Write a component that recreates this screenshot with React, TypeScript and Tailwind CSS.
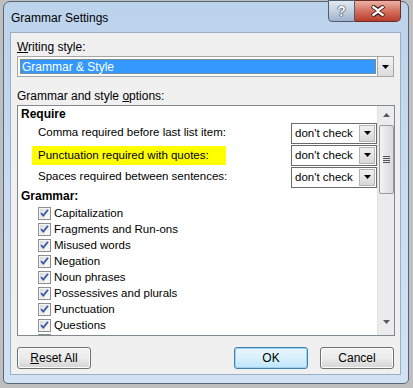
import React from 'react';

const font = { fontFamily: "'Liberation Sans', Arial, sans-serif" };

const requireRows = [
  { label: 'Comma required before last list item:', marked: false },
  { label: 'Punctuation required with quotes:', marked: true },
  { label: 'Spaces required between sentences:', marked: false },
];

const grammarItems = [
  'Capitalization',
  'Fragments and Run-ons',
  'Misused words',
  'Negation',
  'Noun phrases',
  'Possessives and plurals',
  'Punctuation',
  'Questions',
];

const DownTriangle: React.FC<{ color?: string }> = ({ color = '#000' }) => (
  <svg width="7" height="4" viewBox="0 0 7 4">
    <path d="M0 0H7L3.5 4Z" fill={color} />
  </svg>
);

const CheckBox: React.FC = () => (
  <svg width="13" height="13" viewBox="0 0 13 13" className="shrink-0">
    <defs>
      <linearGradient id="cbg" x1="0" y1="0" x2="1" y2="1">
        <stop offset="0" stopColor="#dcdcdc" />
        <stop offset="1" stopColor="#fbfbfb" />
      </linearGradient>
    </defs>
    <rect x="0.5" y="0.5" width="12" height="12" fill="#f4f4f4" stroke="#8e8f8f" />
    <rect x="2" y="2" width="9" height="9" fill="url(#cbg)" />
    <path d="M3 6.2L5.3 8.6L10 2.8" fill="none" stroke="#3d5a9e" strokeWidth="1.8" />
  </svg>
);

const Combo: React.FC = () => (
  <div className="w-[86px] h-[21px] border border-[#6b6b6b] bg-white flex items-stretch shrink-0">
    <span className="flex-1 pl-[3px] text-[11.5px] leading-[19px] text-black">don't check</span>
    <div className="w-[16px] m-[1px] border border-[#b5b5b5] bg-gradient-to-b from-[#f0f0f0] to-[#d8d8d8] flex items-center justify-center">
      <DownTriangle />
    </div>
  </div>
);

const Button: React.FC<{ children: React.ReactNode; focused?: boolean }> = ({ children, focused }) => (
  <div
    className={
      'w-[74px] h-[22px] rounded-[3px] border flex items-center justify-center text-[12px] text-black ' +
      (focused
        ? 'border-[#3c7fb1] bg-gradient-to-b from-[#eaf6fd] via-[#d9f0fc] to-[#bee6fd] shadow-[inset_0_0_0_1px_#9fd4f5]'
        : 'border-[#707070] bg-gradient-to-b from-[#f2f2f2] via-[#ebebeb] to-[#d4d4d4] shadow-[inset_0_0_0_1px_#fcfcfc]')
    }
  >
    {children}
  </div>
);

const App: React.FC = () => {
  return (
    <div className="w-[413px] h-[388px] bg-[#bfbfbf] overflow-hidden" style={font}>
      <div className="ml-[3px] mt-[1px] w-[406px] h-[383px] rounded-t-[7px] rounded-b-[5px] border border-[#5a6676] bg-gradient-to-b from-[#bcd3ec] via-[#c9dcf1] to-[#d2e2f4] relative">
        {/* title bar */}
        <div className="h-[30px] flex items-start">
          <span className="pl-[7px] pt-[9px] text-[12px] leading-[14px] text-black">Grammar Settings</span>
        </div>
        <div className="absolute top-[-2px] right-[7px] flex">
          <div className="w-[27px] h-[22px] rounded-bl-[4px] border border-[#4f5c6e] bg-gradient-to-b from-[#e1e9f3] via-[#c3d1e1] to-[#9fb3cb] flex items-center justify-center">
            <span className="text-[14px] font-bold text-white [text-shadow:0_0_1px_#223,0_0_1px_#223,0_0_1px_#223]">?</span>
          </div>
          <div className="w-[46px] h-[22px] rounded-br-[5px] border border-l-0 border-[#6d2a25] bg-gradient-to-b from-[#eab2a6] via-[#d5705f] to-[#b93c2c] flex items-center justify-center">
            <svg width="16" height="12" viewBox="0 0 16 12">
              <path d="M2 1L8 5L14 1M2 11L8 7L14 11" fill="none" stroke="#3a1a18" strokeWidth="4.2" strokeLinejoin="round" />
              <path d="M2.5 1.5L8 5.5L13.5 1.5M2.5 10.5L8 6.5L13.5 10.5" fill="none" stroke="#fff" strokeWidth="2.2" />
            </svg>
          </div>
        </div>

        {/* client area */}
        <div className="mx-[6px] w-[391px] h-[343px] border border-[#9aaec6] bg-[#f0f0f0] pl-[6px] pr-[6px] pt-[7px]">
          <div className="text-[12px] leading-[14px] text-black">
            <span className="underline">W</span>riting style:
          </div>
          <div className="mt-[2px] w-[377px] h-[21px] border border-[#a5a5a5] bg-white flex items-stretch">
            <div className="flex-1 m-[2px] mr-[1px] bg-[#3399ff] border border-dotted border-[#c08030] flex items-center">
              <span className="pl-[1px] text-[12px] text-white">Grammar &amp; Style</span>
            </div>
            <div className="w-[16px] border-l border-[#a5a5a5] bg-gradient-to-b from-[#f4f4f4] to-[#dcdcdc] flex items-center justify-center">
              <DownTriangle />
            </div>
          </div>

          <div className="mt-[12px] text-[12px] leading-[14px] text-black">
            Grammar and style <span className="underline">o</span>ptions:
          </div>
          <div className="mt-[2px] w-[378px] h-[231px] border border-[#828790] bg-white flex overflow-hidden">
            <div className="flex-1 overflow-hidden">
              <div className="h-[16px] pl-[3px] text-[12px] leading-[16px] font-bold text-black">Require</div>
              {requireRows.map((r) => (
                <div key={r.label} className="h-[22px] flex items-center justify-between pl-[20px]">
                  {r.marked ? (
                    <span className="-ml-[6px] pl-[6px] pr-[17px] h-[19px] mt-[1px] bg-[#ffff00] text-[11.5px] leading-[19px] text-black">
                      {r.label}
                    </span>
                  ) : (
                    <span className="text-[11.5px] text-black">{r.label}</span>
                  )}
                  <Combo />
                </div>
              ))}
              <div className="h-[17px] pl-[3px] text-[12px] leading-[17px] font-bold text-black">Grammar:</div>
              {grammarItems.map((g) => (
                <div key={g} className="h-[16px] flex items-center pl-[20px] gap-[3px]">
                  <CheckBox />
                  <span className="text-[11.5px] text-black leading-[16px]">{g}</span>
                </div>
              ))}
              <div className="h-[16px] flex items-start pl-[20px] pt-[1px]">
                <CheckBox />
              </div>
            </div>
            {/* scrollbar */}
            <div className="w-[17px] bg-[#ececec] border-l border-[#e2e2e2] flex flex-col items-center">
              <div className="h-[18px] flex items-center justify-center">
                <svg width="7" height="4" viewBox="0 0 7 4">
                  <path d="M0 4H7L3.5 0Z" fill="#5a5a5a" />
                </svg>
              </div>
              <div className="w-[15px] h-[69px] mt-[1px] rounded-[2px] border border-[#9a9a9a] bg-gradient-to-r from-[#f3f3f3] to-[#d9d9d9] flex flex-col items-center justify-center gap-[1px]">
                <div className="w-[7px] h-[1px] bg-[#555]" />
                <div className="w-[7px] h-[1px] bg-[#555]" />
                <div className="w-[7px] h-[1px] bg-[#555]" />
                <div className="w-[7px] h-[1px] bg-[#555]" />
              </div>
              <div className="flex-1" />
              <div className="h-[16px] flex items-start justify-center pt-[1px]">
                <DownTriangle color="#5a5a5a" />
              </div>
            </div>
          </div>

          <div className="mt-[11px] flex items-center">
            <Button>
              <span className="underline">R</span>eset All
            </Button>
            <div className="flex-1" />
            <Button focused>OK</Button>
            <div className="w-[12px]" />
            <Button>Cancel</Button>
          </div>
        </div>
      </div>
    </div>
  );
};

export default App;
